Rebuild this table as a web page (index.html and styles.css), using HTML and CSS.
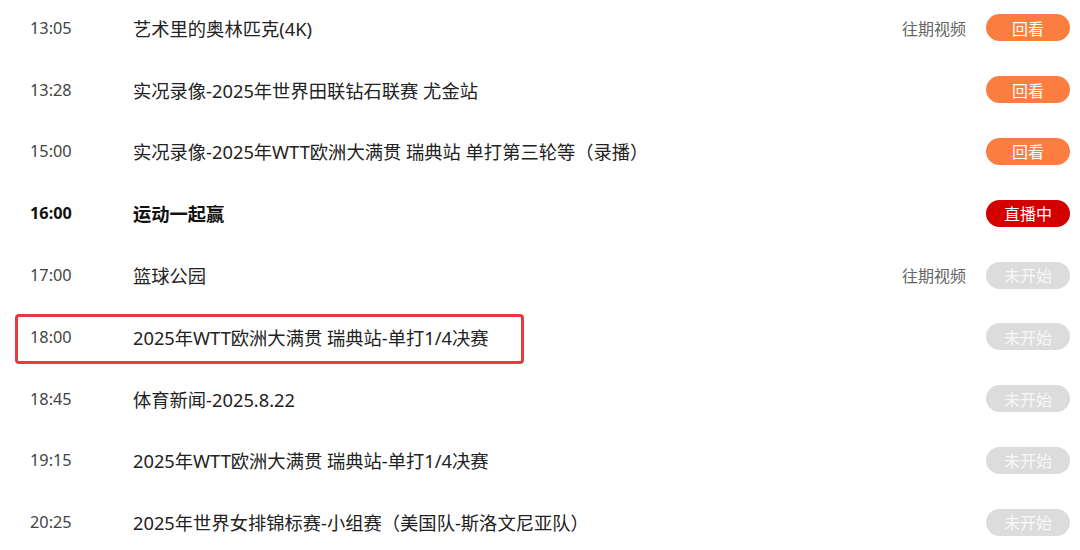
FILE: index.html
```html
<!DOCTYPE html>
<html lang="zh-CN">
<head>
<meta charset="utf-8">
<title>节目单</title>
<link rel="stylesheet" href="styles.css">
</head>
<body>
<ul class="schedule">
  <li class="row">
    <span class="time">13:05</span>
    <span class="title">艺术里的奥林匹克(4K)</span>
    <span class="past">往期视频</span>
    <span class="btn replay">回看</span>
  </li>
  <li class="row">
    <span class="time">13:28</span>
    <span class="title">实况录像-2025年世界田联钻石联赛 尤金站</span>
    <span class="btn replay">回看</span>
  </li>
  <li class="row">
    <span class="time">15:00</span>
    <span class="title">实况录像-2025年WTT欧洲大满贯 瑞典站 单打第三轮等（录播）</span>
    <span class="btn replay">回看</span>
  </li>
  <li class="row live">
    <span class="time">16:00</span>
    <span class="title">运动一起赢</span>
    <span class="btn onair">直播中</span>
  </li>
  <li class="row">
    <span class="time">17:00</span>
    <span class="title">篮球公园</span>
    <span class="past">往期视频</span>
    <span class="btn pending">未开始</span>
  </li>
  <li class="row marked">
    <span class="time">18:00</span>
    <span class="title">2025年WTT欧洲大满贯 瑞典站-单打1/4决赛</span>
    <span class="btn pending">未开始</span>
    <span class="highlight"></span>
  </li>
  <li class="row">
    <span class="time">18:45</span>
    <span class="title">体育新闻-2025.8.22</span>
    <span class="btn pending">未开始</span>
  </li>
  <li class="row">
    <span class="time">19:15</span>
    <span class="title">2025年WTT欧洲大满贯 瑞典站-单打1/4决赛</span>
    <span class="btn pending">未开始</span>
  </li>
  <li class="row">
    <span class="time">20:25</span>
    <span class="title">2025年世界女排锦标赛-小组赛（美国队-斯洛文尼亚队）</span>
    <span class="btn pending">未开始</span>
  </li>
</ul>
</body>
</html>
```
FILE: styles.css
```css
html, body {
  margin: 0;
  padding: 0;
  background: #fff;
}
body {
  font-family: "Noto Sans", "Noto Sans CJK SC", sans-serif;
  color: #222;
  overflow: hidden;
}
.schedule {
  list-style: none;
  margin: -3px 0 0 0;
  padding: 0;
}
.row {
  position: relative;
  display: flex;
  align-items: center;
  height: 61.8px;
  padding: 0 10px 0 30px;
}
.time {
  width: 103px;
  flex: none;
  font-size: 16.3px;
  color: #444;
}
.title {
  flex: 1;
  font-size: 18.3px;
  color: #222;
  white-space: nowrap;
}
.live .time,
.live .title {
  font-weight: bold;
  color: #111;
}
.past {
  font-size: 16px;
  color: #666;
  margin-right: 20px;
}
.btn {
  flex: none;
  width: 84px;
  height: 27px;
  border-radius: 14px;
  display: flex;
  align-items: center;
  justify-content: center;
  font-size: 16px;
  color: #fff;
}
.replay { background: #fb7d3f; }
.onair { background: #d40000; }
.pending { background: #dcdcdc; color: #f7f7f7; }
.highlight {
  position: absolute;
  left: 15px;
  top: 8px;
  width: 509px;
  height: 50px;
  box-sizing: border-box;
  border: 3px solid #e8393f;
  border-radius: 4px;
  pointer-events: none;
}
```
